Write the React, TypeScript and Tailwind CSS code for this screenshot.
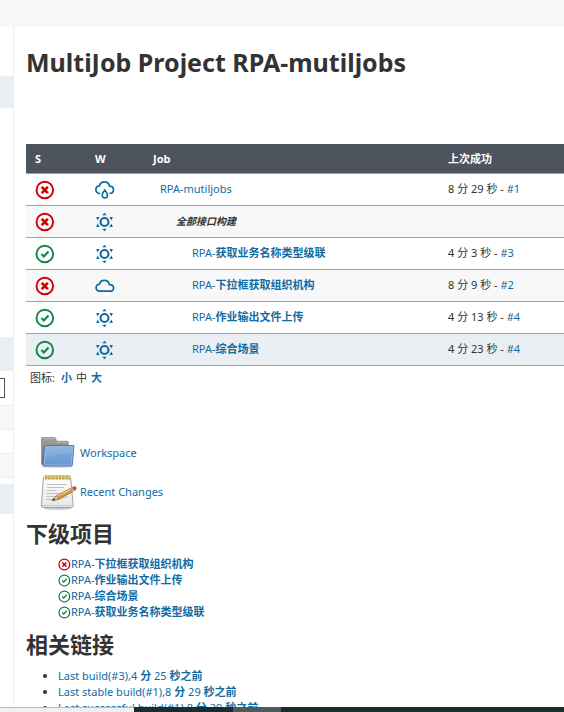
import { clsx } from "clsx";

type Status = "failed" | "success";
type Weather = "rain" | "sun" | "cloud";

type Job = {
  prefix: string;
  name?: string;
  phase?: boolean;
  nested?: boolean;
  status: Status;
  weather: Weather;
  last?: string;
  build?: string;
};

const jobs: Job[] = [
  { prefix: "RPA-mutiljobs", status: "failed", weather: "rain", last: "8 分 29 秒", build: "#1" },
  { prefix: "", name: "全部接口构建", phase: true, status: "failed", weather: "sun" },
  { prefix: "RPA-", name: "获取业务名称类型级联", nested: true, status: "success", weather: "sun", last: "4 分 3 秒", build: "#3" },
  { prefix: "RPA-", name: "下拉框获取组织机构", nested: true, status: "failed", weather: "cloud", last: "8 分 9 秒", build: "#2" },
  { prefix: "RPA-", name: "作业输出文件上传", nested: true, status: "success", weather: "sun", last: "4 分 13 秒", build: "#4" },
  { prefix: "RPA-", name: "综合场景", nested: true, status: "success", weather: "sun", last: "4 分 23 秒", build: "#4" },
];

const downstream: { name: string; status: Status }[] = [
  { name: "下拉框获取组织机构", status: "failed" },
  { name: "作业输出文件上传", status: "success" },
  { name: "综合场景", status: "success" },
  { name: "获取业务名称类型级联", status: "success" },
];

const permalinks = [
  { label: "Last build(#3),", min: "4", sec: "25" },
  { label: "Last stable build(#1),", min: "8", sec: "29" },
  { label: "Last successful build(#1),", min: "8", sec: "29" },
];

const StatusIcon = ({ status, className }: { status: Status; className: string }) => (
  <svg viewBox="0 0 20 20" fill="none" className={className} role="img" aria-label={status}>
    {status === "failed" ? (
      <g stroke="#cc0003">
        <circle cx="9.8" cy="10" r="8.3" strokeWidth="1.9" />
        <path d="M6.700 6.900l6.200 6.200M12.900 6.900l-6.200 6.200" strokeWidth="2.600" />
      </g>
    ) : (
      <g stroke="#138347">
        <circle cx="9.8" cy="10" r="8.3" strokeWidth="1.9" />
        <path d="M6.400 10.100l2.400 2.300 4.700-4.800" strokeWidth="2.100" />
      </g>
    )}
  </svg>
);

const WeatherIcon = ({ weather }: { weather: Weather }) => (
  <svg viewBox="0 0 20 20" fill="none" stroke="#106ba3" strokeWidth="1.7" className="block size-5" role="img" aria-label={weather}>
    {weather === "sun" && (
      <>
        <circle cx="9.500" cy="10" r="4" strokeWidth="2.100" />
        <g fill="#106ba3" stroke="none">
          <path d="M9.500 .8l2.200 2.500H7.300z" />
          <path d="M9.500 19.200l2.200-2.500H7.300z" />
          <path d="M1.200 5h3.500l-2.200 3.500z" />
          <path d="M17.800 5h-3.500l2.200 3.500z" />
          <path d="M1.200 15h3.500l-2.200-3.500z" />
          <path d="M17.800 15h-3.500l2.200-3.500z" />
        </g>
      </>
    )}
    {weather === "cloud" && (
      <path d="M4.700 15.200a3.500 3.500 0 0 1-.3-7C5.100 5.600 7.200 4.400 9.400 4.400c2.500 0 4.500 1.600 5 4.200 2.400 0 4.100 1.300 4.100 3.300s-1.600 3.300-3.700 3.300z" />
    )}
    {weather === "rain" && (
      <>
        <path d="M5 13.500C2.600 13.500 .9 11.800 .9 9.700c0-2 1.400-3.600 3.500-3.800C5.100 3.200 7 1.900 9.400 1.900c2.600 0 4.600 1.600 5.100 4.300 2.300.1 4 1.500 4 3.600 0 2.200-1.700 3.700-4.100 3.700" />
        <path d="M9.800 10c-1.600 2-2.700 3.600-2.700 5.200a2.700 2.700 0 0 0 5.400 0c0-1.600-1.100-3.200-2.700-5.200z" strokeWidth="1.600" />
      </>
    )}
  </svg>
);

const FolderIcon = () => (
  <svg viewBox="0 0 36 36" className="size-9" aria-hidden="true">
    <defs>
      <linearGradient id="folderBack" x1="0" y1="0" x2="0" y2="1">
        <stop offset="0" stopColor="#a2a2a0" />
        <stop offset="1" stopColor="#6e6e6c" />
      </linearGradient>
      <linearGradient id="folderFront" x1="0" y1="0" x2="0" y2="1">
        <stop offset="0" stopColor="#84addb" />
        <stop offset="1" stopColor="#6697d0" />
      </linearGradient>
    </defs>
    <ellipse cx="17" cy="31.500" rx="16" ry="1.500" fill="#000" opacity=".18" />
    <path d="M1.500 29.500V3Q1.500 2.500 2 2.500h12.500q.7 0 1 .8l1.300 3H27.500q.8 0 .8.800V29.500z" fill="url(#folderBack)" stroke="#858583" strokeWidth=".7" />
    <path d="M2.500 3.600h12M16.500 7.400h11" stroke="#bdbdbb" strokeWidth=".7" />
    <path d="M5.200 10.500h28.200q.6 0 .5.600L32.300 30q-.1 1-1 1H3.700q-.9 0-.7-1L4.600 11.100q.1-.6.600-.6z" fill="url(#folderFront)" stroke="#4175b3" strokeWidth=".9" />
    <path d="M5.800 11.600h27l-1.500 18.300H4.100z" fill="none" stroke="#b6d0ee" strokeWidth=".7" opacity=".6" />
    <path d="M6 11.800h26.500l-.6 6C20 18.500 13 20 5 23.500z" fill="#fff" opacity=".1" />
  </svg>
);

const NotepadIcon = () => (
  <svg viewBox="0 0 38 36" className="h-9 w-[38px]" aria-hidden="true">
    <defs>
      <linearGradient id="paper" x1="0" y1="0" x2="0" y2="1">
        <stop offset="0" stopColor="#fff" />
        <stop offset="1" stopColor="#e6e6e4" />
      </linearGradient>
    </defs>
    <ellipse cx="17.500" cy="34.500" rx="14" ry="1.400" fill="#000" opacity=".2" />
    <path d="M4.500 3h25q1 0 1.100 1l2.600 27q.1 2.500-2 2.500H3.400q-2.200 0-2-2.500L3.400 4q.1-1 1.100-1z" fill="url(#paper)" stroke="#979795" strokeWidth=".9" />
    <path d="M2.300 31.500h30" stroke="#c4c4c2" strokeWidth=".8" />
    <path d="M7 10.500h20M7 13.500h17M6.500 16.500h10M6.500 19.500h17M6 22.500h10M6 25.500h8" stroke="#bcbcba" strokeWidth=".9" />
    <path d="M5 3.200h25.500" stroke="#a9952a" strokeWidth="4.600" strokeDasharray="2.100 .7" />
    <path d="M5.400 2.800h25" stroke="#ead94e" strokeWidth="3" strokeDasharray="1.300 1.500" />
    <path d="M13 27l15-4.500" stroke="#000" strokeWidth="1.600" opacity=".13" />
    <path d="M12.300 26.300l4.200-4.600 14.200-7.400 1.900 3.500-14.200 7.400z" fill="#d99b3a" stroke="#8a5d18" strokeWidth=".7" />
    <path d="M17.200 22.300l13.700-7.100" stroke="#f3cb80" strokeWidth="1.100" />
    <path d="M12.300 26.300l4.200-4.600 1.900 3.500z" fill="#e9cfa0" stroke="#8a5d18" strokeWidth=".5" />
    <path d="M12 26.500l2-2.300.9 1.600z" fill="#222" />
    <path d="M30.700 14.300l1.900-1 1.900 3.500-1.900 1z" fill="#b5b5b5" />
    <path d="M32.400 13.400l1.700-.9q1.300-.4 2 .9t-.2 2.300l-1.700.9z" fill="#e0403b" stroke="#c02a28" strokeWidth=".4" />
  </svg>
);

const linkClass = "text-[#106ba3]";

const App = () => {
  return (
    <div className="flex h-screen flex-col overflow-hidden bg-white font-['Noto_Sans','Noto_Sans_CJK_SC',sans-serif] text-[11px] leading-4 text-[#333333]">
      <header className="h-[27px] shrink-0 bg-[#f8f8f8]" />
      <div className="flex min-h-0 flex-1 overflow-hidden">
        <aside className="w-[14px] shrink-0 border-r border-[#e9eff2]">
          <div className="mt-[49px] h-8 bg-[#e9eff2]" />
          <div className="mt-[229px] h-[34px] bg-[#e9eff2]" />
          <input
            type="text"
            aria-label="find"
            className="mt-[7px] block h-5 w-[5px] border border-l-0 border-[#555555] bg-white"
          />
          <div className="mt-[7px] h-[25px] border-y border-[#e9eff2] bg-[#f8f8f8]" />
          <div className="h-[23px]" />
          <div className="h-[25px] border-y border-[#e9eff2] bg-[#f8f8f8]" />
          <div className="mt-[6px] h-[30px] bg-[#e9eff2]" />
        </aside>
        <main className="min-w-0 flex-1 pl-3">
          <h1 className="mt-[19px] text-[25px] leading-8 font-bold whitespace-nowrap">
            MultiJob Project RPA-mutiljobs
          </h1>
          <table className="mt-[66px] w-full table-fixed border-collapse">
            <thead>
              <tr className="h-[29px] bg-[#4d545d] text-left text-white">
                <th className="w-[60px] px-[9px] pt-[2px] pb-0">S</th>
                <th className="w-[58px] px-[9px] pt-[2px] pb-0">W</th>
                <th className="w-[295px] px-[9px] pt-[2px] pb-0">Job</th>
                <th className="px-[9px] pt-[2px] pb-0">上次成功</th>
              </tr>
            </thead>
            <tbody>
              {jobs.map((job, i) => (
                <tr
                  key={i}
                  className={clsx(
                    "h-8 border-y border-[#9ba4ac]",
                    i === jobs.length - 1 ? "bg-[#e9eff2]" : i % 2 === 1 && "bg-[#f8f8f8]"
                  )}
                >
                  <td className="px-[9px] pt-[2px] pb-0">
                    <StatusIcon status={job.status} className="block size-5" />
                  </td>
                  <td className="px-[9px] pt-[2px] pb-0">
                    <WeatherIcon weather={job.weather} />
                  </td>
                  <td
                    className={clsx(
                      "py-0",
                      job.phase ? "pl-8" : job.nested ? "pl-12" : "pl-4"
                    )}
                  >
                    {job.phase ? (
                      <em className="text-[10px] font-bold">{job.name}</em>
                    ) : (
                      <a href="#" className={linkClass}>
                        {job.prefix}
                        <span className="font-bold">{job.name}</span>
                      </a>
                    )}
                  </td>
                  <td className="px-[9px] py-0">
                    {job.last && (
                      <>
                        {job.last} - <a href="#" className={linkClass}>{job.build}</a>
                      </>
                    )}
                  </td>
                </tr>
              ))}
            </tbody>
          </table>
          <div className="mt-1 flex gap-1 pl-1">
            <span className="mr-[2px]">图标:</span>
            <a href="#" className={clsx(linkClass, "font-bold")}>小</a>
            <span>中</span>
            <a href="#" className={clsx(linkClass, "font-bold")}>大</a>
          </div>

          <div className="mt-[49px] flex flex-col gap-[3px] pl-[14px]">
            <a href="#" className={clsx(linkClass, "flex items-center gap-1")}>
              <FolderIcon />
              Workspace
            </a>
            <a href="#" className={clsx(linkClass, "flex items-center gap-[2px]")}>
              <NotepadIcon />
              Recent Changes
            </a>
          </div>

          <h2 className="mt-[7px] text-[22px] leading-8 font-bold">下级项目</h2>
          <ul className="mt-[7px] pl-8">
            {downstream.map((item) => (
              <li key={item.name} className="flex items-center">
                <StatusIcon status={item.status} className="mt-[2px] size-[13px]" />
                <a href="#" className={linkClass}>
                  RPA-<span className="font-bold">{item.name}</span>
                </a>
              </li>
            ))}
          </ul>

          <h2 className="mt-2 text-[22px] leading-8 font-bold">相关链接</h2>
          <ul className="mt-2 list-disc pl-8">
            {permalinks.map((link) => (
              <li key={link.label}>
                <a href="#" className={linkClass}>
                  {link.label}
                  {link.min} <b>分</b> {link.sec} <b>秒之前</b>
                </a>
              </li>
            ))}
          </ul>
        </main>
      </div>
      <footer className="flex h-[5px] shrink-0 bg-[#1b2c31]">
        <div className="w-[134px] border-t border-[#bdbdbd] bg-[#f0f0f0]" />
        <div className="ml-[99px] w-12 bg-[#4b5a5c]" />
      </footer>
    </div>
  );
};

export default App;
